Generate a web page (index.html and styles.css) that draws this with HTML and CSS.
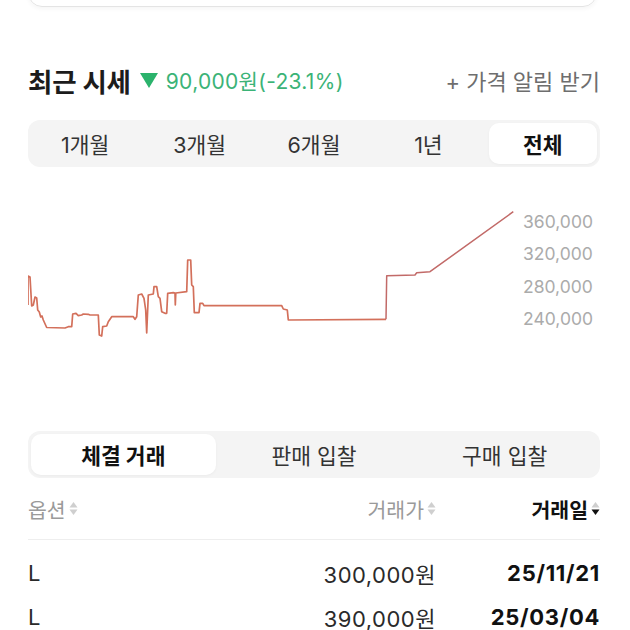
FILE: index.html
```html
<!DOCTYPE html>
<html lang="ko">
<head>
<meta charset="utf-8">
<title>최근 시세</title>
<link rel="stylesheet" href="styles.css">
</head>
<body>
<div class="page">
  <div class="card-edge"></div>

  <div class="title-row">
    <div class="title-left">
      <h2 class="title">최근 시세</h2>
      <span class="delta">
        <svg class="tri" width="20" height="17" viewBox="0 0 20 17"><path d="M1 1 L19 1 L10 16 Z" fill="#2bb36c"/></svg>
        90,000원(-23.1%)
      </span>
    </div>
    <div class="alert">+ 가격 알림 받기</div>
  </div>

  <div class="seg seg5">
    <div class="seg-item">1개월</div>
    <div class="seg-item">3개월</div>
    <div class="seg-item">6개월</div>
    <div class="seg-item">1년</div>
    <div class="seg-item active">전체</div>
  </div>

  <div class="chart">
    <svg class="chart-svg" width="495" height="264" viewBox="28 167 495 264">
      <path fill="none" stroke="#d3705b" stroke-width="1.7" stroke-linejoin="round" d="M28,305 L28,276 L30,277 L31.7,306 L33.3,305 L35,297 L36.7,298 L37.7,310 L39.3,312 L40.7,317 L42,316 L43.3,320 L46.7,327.5 L65,328 L68.3,326.7 L71.7,326.7 L72.7,314 L76,313.3 L78.3,315.7 L81.7,315 L83.3,314 L88.3,314.3 L90,315 L98.3,315 L99.3,335 L101.7,336 L102.7,326.7 L106.7,326 L108.3,321.7 L111.7,316.7 L133.3,316.7 L135,319.3 L136.7,316.7 L138.3,295 L141.7,294 L144,298.3 L145.7,310 L146.7,333 L148.3,295 L153.3,294 L154,286.7 L156.7,286.7 L158.3,296.7 L160,298.3 L161.7,311.7 L165,313.3 L166.7,313.3 L167.7,293.3 L173.3,292.7 L175,293 L175.3,305 L175.8,293 L186.7,291.7 L187.7,260 L190.7,260 L191.7,285 L193.3,286.7 L194.3,312.7 L199,312.7 L200,303.3 L202.7,303.3 L204,305.7 L281.7,305.7 L283.3,309 L287.3,310 L288.3,320 L386,319.3"/>
      <path fill="none" stroke="#c26a68" stroke-width="1.5" stroke-linejoin="round" d="M386,319.3 L386.7,275.7 L415,275 L416.7,272.7 L430,271.7 L513.3,211.7"/>
    </svg>
    <div class="ylabels">
      <span>360,000</span>
      <span>320,000</span>
      <span>280,000</span>
      <span>240,000</span>
    </div>
  </div>

  <div class="seg seg3">
    <div class="seg-item active">체결 거래</div>
    <div class="seg-item">판매 입찰</div>
    <div class="seg-item">구매 입찰</div>
  </div>

  <div class="table">
    <div class="trow thead">
      <div class="th">옵션<svg class="sort" width="9" height="15" viewBox="0 0 9 15"><path d="M4.5 1 L8.5 6.5 L0.5 6.5 Z" fill="#cfcfcf"/><path d="M4.5 14 L8.5 8.5 L0.5 8.5 Z" fill="#cfcfcf"/></svg></div>
      <div class="th right">거래가<svg class="sort" width="9" height="15" viewBox="0 0 9 15"><path d="M4.5 1 L8.5 6.5 L0.5 6.5 Z" fill="#cfcfcf"/><path d="M4.5 14 L8.5 8.5 L0.5 8.5 Z" fill="#cfcfcf"/></svg></div>
      <div class="th right on">거래일<svg class="sort" width="9" height="15" viewBox="0 0 9 15"><path d="M4.5 1 L8.5 6.5 L0.5 6.5 Z" fill="#cfcfcf"/><path d="M4.5 14 L8.5 8.5 L0.5 8.5 Z" fill="#111"/></svg></div>
    </div>
    <div class="tbody">
      <div class="trow">
        <div class="td">L</div>
        <div class="td right price">300,000원</div>
        <div class="td right date">25/11/21</div>
      </div>
      <div class="trow">
        <div class="td">L</div>
        <div class="td right price">390,000원</div>
        <div class="td right date">25/03/04</div>
      </div>
    </div>
  </div>
</div>
</body>
</html>
```

FILE: styles.css
```css
* { box-sizing: border-box; }

html, body {
  margin: 0;
  padding: 0;
  background: #fff;
  overflow: hidden;
}

body {
  font-family: "Inter", "Noto Sans CJK KR", sans-serif;
  color: #222;
}

.page {
  padding: 0 30px 0 28px;
}

.card-edge {
  height: 20px;
  margin-top: -13px;
  margin-right: 3px;
  border: 1px solid #e4e4e4;
  border-radius: 0 0 14px 14px;
  box-shadow: 0 2px 4px rgba(0, 0, 0, 0.04);
}

.title-row {
  display: flex;
  align-items: center;
  justify-content: space-between;
  height: 34px;
  margin-top: 56px;
}

.title-left {
  display: flex;
  align-items: center;
}

.title {
  margin: 0;
  font-size: 26.5px;
  font-weight: 700;
  color: #1c1c1c;
  letter-spacing: -0.2px;
}

.delta {
  display: flex;
  align-items: center;
  gap: 7px;
  margin-left: 8px;
  font-size: 21px;
  letter-spacing: 0.3px;
  color: #3bb377;
}

.tri {
  display: block;
}

.alert {
  font-size: 22px;
  color: #6e6e6e;
}

.seg {
  display: grid;
  gap: 6px;
  height: 47px;
  padding: 3px;
  background: #f4f4f4;
  border-radius: 12px;
}

.seg5 {
  grid-template-columns: repeat(5, 1fr);
  margin-top: 23px;
}

.seg3 {
  grid-template-columns: repeat(3, 1fr);
}

.seg-item {
  display: flex;
  align-items: center;
  justify-content: center;
  font-size: 21.5px;
  color: #333;
  border-radius: 10px;
}

.seg-item.active {
  background: #fff;
  font-weight: 700;
  color: #111;
  box-shadow: 0 1px 3px rgba(0, 0, 0, 0.04);
}

.chart {
  display: flex;
  height: 264px;
}

.chart-svg {
  display: block;
  flex: none;
}

.ylabels {
  display: flex;
  flex-direction: column;
  padding-top: 39px;
  font-size: 17.5px;
  line-height: 32.3px;
  color: #ababab;
}

.trow {
  display: grid;
  grid-template-columns: 1fr 140px 164px;
  align-items: center;
}

.thead {
  height: 62px;
  border-bottom: 1px solid #eeeeee;
}

.th {
  display: flex;
  align-items: center;
  gap: 3px;
  font-size: 20.5px;
  color: #9a9a9a;
}

.th.right {
  justify-content: flex-end;
}

.th.on {
  color: #111;
  font-weight: 700;
}

.sort {
  display: block;
}

.tbody {
  padding-top: 11px;
}

.tbody .trow {
  height: 44px;
}

.td {
  font-size: 22px;
  color: #2a2a2a;
}

.td.right {
  text-align: right;
}

.td.price {
  letter-spacing: 0.5px;
}

.td.date {
  font-weight: 700;
  color: #111;
  letter-spacing: 0.7px;
}
```
